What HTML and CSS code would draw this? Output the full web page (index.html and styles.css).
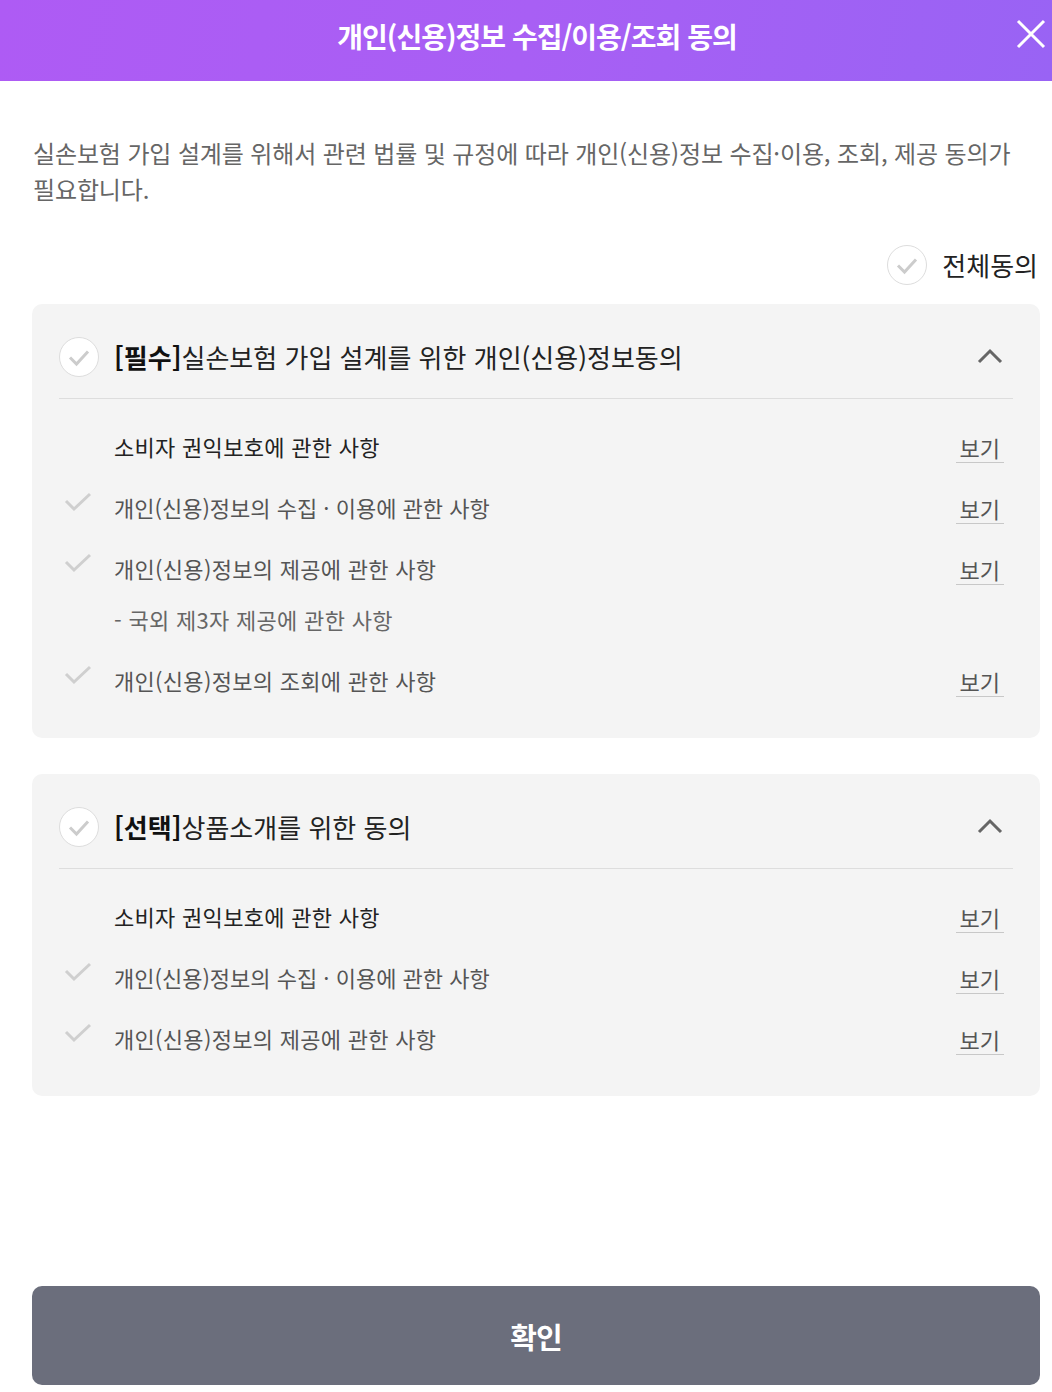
FILE: index.html
```html
<!DOCTYPE html>
<html lang="ko">
<head>
<meta charset="utf-8">
<title>개인(신용)정보 수집/이용/조회 동의</title>
<link rel="stylesheet" href="styles.css">
</head>
<body>
<div class="page">
  <header class="topbar">
    <h1 class="title">개인(신용)정보 수집/이용/조회 동의</h1>
    <button class="close" aria-label="닫기">
      <svg width="30" height="30" viewBox="0 0 30 30"><path d="M2 2 L28 28 M28 2 L2 28" stroke="#fff" stroke-width="3" fill="none"/></svg>
    </button>
  </header>

  <main class="content">
    <p class="intro">실손보험 가입 설계를 위해서 관련 법률 및 규정에 따라 개인(신용)정보 수집·이용, 조회, 제공 동의가 필요합니다.</p>

    <div class="all-agree">
      <span class="circle-check">
        <svg width="24" height="24" viewBox="0 0 24 24"><path d="M3 12.5 L9.5 19 L21 6.5" stroke="#ccc" stroke-width="3" fill="none"/></svg>
      </span>
      <span class="all-label">전체동의</span>
    </div>

    <section class="card">
      <div class="card-head">
        <span class="circle-check">
          <svg width="24" height="24" viewBox="0 0 24 24"><path d="M3 12.5 L9.5 19 L21 6.5" stroke="#ccc" stroke-width="3" fill="none"/></svg>
        </span>
        <span class="card-title"><b>[필수]</b>실손보험 가입 설계를 위한 개인(신용)정보동의</span>
        <svg class="chev" width="26" height="16" viewBox="0 0 26 16"><path d="M2 14 L13 3 L24 14" stroke="#666" stroke-width="3" fill="none"/></svg>
      </div>
      <ul class="items">
        <li class="item"><span class="tick"></span><span class="label dark">소비자 권익보호에 관한 사항</span><a class="view">보기</a></li>
        <li class="item"><span class="tick"><svg width="28" height="20" viewBox="0 0 28 20"><path d="M2 9 L10 17 L26 2" stroke="#cfcfcf" stroke-width="3" fill="none"/></svg></span><span class="label tight">개인(신용)정보의 수집 · 이용에 관한 사항</span><a class="view">보기</a></li>
        <li class="item"><span class="tick"><svg width="28" height="20" viewBox="0 0 28 20"><path d="M2 9 L10 17 L26 2" stroke="#cfcfcf" stroke-width="3" fill="none"/></svg></span><span class="label">개인(신용)정보의 제공에 관한 사항</span><a class="view">보기</a></li>
        <li class="item sub"><span class="tick"></span><span class="label light">- 국외 제3자 제공에 관한 사항</span></li>
        <li class="item"><span class="tick"><svg width="28" height="20" viewBox="0 0 28 20"><path d="M2 9 L10 17 L26 2" stroke="#cfcfcf" stroke-width="3" fill="none"/></svg></span><span class="label">개인(신용)정보의 조회에 관한 사항</span><a class="view">보기</a></li>
      </ul>
    </section>

    <section class="card">
      <div class="card-head">
        <span class="circle-check">
          <svg width="24" height="24" viewBox="0 0 24 24"><path d="M3 12.5 L9.5 19 L21 6.5" stroke="#ccc" stroke-width="3" fill="none"/></svg>
        </span>
        <span class="card-title"><b>[선택]</b>상품소개를 위한 동의</span>
        <svg class="chev" width="26" height="16" viewBox="0 0 26 16"><path d="M2 14 L13 3 L24 14" stroke="#666" stroke-width="3" fill="none"/></svg>
      </div>
      <ul class="items">
        <li class="item"><span class="tick"></span><span class="label dark">소비자 권익보호에 관한 사항</span><a class="view">보기</a></li>
        <li class="item"><span class="tick"><svg width="28" height="20" viewBox="0 0 28 20"><path d="M2 9 L10 17 L26 2" stroke="#cfcfcf" stroke-width="3" fill="none"/></svg></span><span class="label tight">개인(신용)정보의 수집 · 이용에 관한 사항</span><a class="view">보기</a></li>
        <li class="item"><span class="tick"><svg width="28" height="20" viewBox="0 0 28 20"><path d="M2 9 L10 17 L26 2" stroke="#cfcfcf" stroke-width="3" fill="none"/></svg></span><span class="label">개인(신용)정보의 제공에 관한 사항</span><a class="view">보기</a></li>
      </ul>
    </section>
  </main>

  <footer class="footer">
    <button class="confirm">확인</button>
  </footer>
</div>
</body>
</html>
```

FILE: styles.css
```css
* { box-sizing: border-box; }
html, body { margin: 0; padding: 0; background: #fff; }
body {
  font-family: "Noto Sans CJK KR", "Noto Sans", sans-serif;
  color: #222;
}
.page {
  min-height: 100vh;
  display: flex;
  flex-direction: column;
}
.topbar {
  height: 81px;
  background: linear-gradient(100deg, #ae5bf4 0%, #a85ff4 50%, #9963f4 100%);
  display: flex;
  align-items: center;
  justify-content: center;
  position: relative;
}
.title {
  margin: 0 0 0 22px;
  color: #fff;
  font-size: 28px;
  font-weight: 700;
  letter-spacing: -1px;
  line-height: 1;
  padding-bottom: 9px;
}
.close {
  position: absolute;
  right: 5px;
  top: 18px;
  background: none;
  border: 0;
  padding: 0;
  width: 32px;
  height: 32px;
  display: flex;
  align-items: center;
  justify-content: center;
}
.content {
  padding: 54px 12px 0 32px;
  display: flex;
  flex-direction: column;
}
.intro {
  margin: 0;
  padding-left: 1px;
  padding-right: 20px;
  font-size: 24px;
  line-height: 36px;
  letter-spacing: -0.13px;
  color: #666;
  word-break: keep-all;
}
.all-agree {
  margin-top: 38px;
  display: flex;
  justify-content: flex-end;
  align-items: center;
  gap: 15px;
  padding-right: 2px;
}
.all-label {
  font-size: 26px;
  color: #222;
  line-height: 40px;
}
.circle-check {
  width: 40px;
  height: 40px;
  border-radius: 50%;
  border: 1px solid #ddd;
  background: #fff;
  display: flex;
  align-items: center;
  justify-content: center;
  flex: none;
}
.card {
  margin-top: 19px;
  background: #f4f4f4;
  border-radius: 10px;
  padding: 0 27px 27px;
}
.card + .card { margin-top: 36px; }
.card-head {
  height: 95px;
  border-bottom: 1px solid #ddd;
  display: flex;
  align-items: center;
  gap: 15px;
  padding-top: 11px;
}
.card-title {
  flex: 1;
  font-size: 26px;
  color: #222;
}
.card-title b { font-weight: 700; color: #111; }
.chev { margin-right: 10px; margin-top: -2px; }
.items {
  list-style: none;
  margin: 0;
  padding: 17px 0 0;
}
.item {
  display: flex;
  align-items: center;
  height: 61px;
}
.item.sub {
  height: 51px;
  align-items: flex-start;
  padding-top: 5px;
}
.tick {
  width: 55px;
  flex: none;
  display: flex;
  align-items: center;
  padding-left: 5px;
  margin-top: -12px;
}
.label {
  flex: 1;
  font-size: 22px;
  line-height: 31px;
  letter-spacing: 0.3px;
  color: #555;
}
.label.tight { letter-spacing: 0; }
.label.dark { color: #222; }
.label.light { color: #666; }
.view {
  font-size: 22px;
  line-height: 28px;
  color: #555;
  padding: 0 4px 1px;
  border-bottom: 1px solid #c8c8c8;
  margin-right: 9px;
  margin-top: 2px;
  cursor: pointer;
}
.footer {
  margin-top: auto;
  padding: 0 12px 7px 32px;
}
.confirm {
  width: 100%;
  height: 99px;
  border: 0;
  border-radius: 10px;
  background: #6b6e7c;
  color: #fff;
  font-family: "Noto Sans CJK KR", "Noto Sans", sans-serif;
  font-size: 29px;
  font-weight: 700;
  letter-spacing: -1px;
}
```
